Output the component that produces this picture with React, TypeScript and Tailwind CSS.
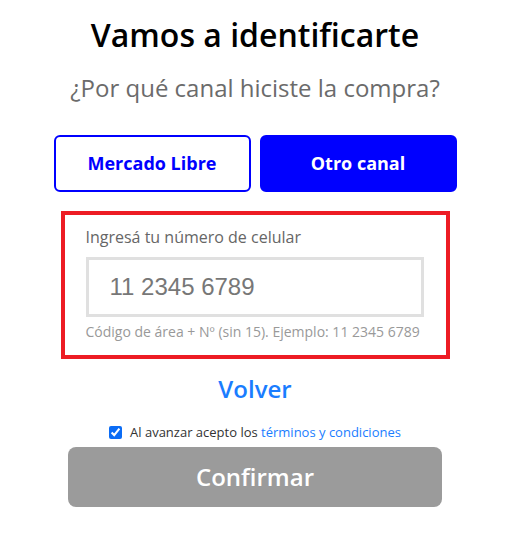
import { useState } from "react";

const FONT = { fontFamily: '"Open Sans", "Noto Sans", sans-serif' };

export default function App() {
  const [channel, setChannel] = useState<"ml" | "otro">("otro");
  const [accepted, setAccepted] = useState(true);

  return (
    <div className="flex min-h-[544px] w-[510px] flex-col items-center bg-white pt-[12px]" style={FONT}>
      <h1 className="text-[32px] leading-[46px] font-semibold text-black">Vamos a identificarte</h1>
      <p className="mt-[14px] text-[24px] leading-[32px] text-[#6b6b6b]">¿Por qué canal hiciste la compra?</p>

      <div className="mt-[31px] flex gap-[9px]">
        <button
          type="button"
          onClick={() => setChannel("ml")}
          className={
            channel === "ml"
              ? "h-[57px] w-[197px] rounded-[6px] border-2 border-[#0000ff] bg-[#0000ff] text-[18px] font-bold text-white"
              : "h-[57px] w-[197px] rounded-[6px] border-2 border-[#0000ff] bg-white text-[18px] font-bold text-[#0000ff]"
          }
        >
          Mercado Libre
        </button>
        <button
          type="button"
          onClick={() => setChannel("otro")}
          className={
            channel === "otro"
              ? "h-[57px] w-[197px] rounded-[6px] border-2 border-[#0000ff] bg-[#0000ff] text-[18px] font-bold text-white"
              : "h-[57px] w-[197px] rounded-[6px] border-2 border-[#0000ff] bg-white text-[18px] font-bold text-[#0000ff]"
          }
        >
          Otro canal
        </button>
      </div>

      <div className="mt-[19px] w-[389px] border-4 border-[#ed1c24] px-[21px] pt-[11px] pb-[13px]">
        <label htmlFor="celular" className="block text-[16px] leading-[22px] text-[#666]">
          Ingresá tu número de celular
        </label>
        <input
          id="celular"
          placeholder="11 2345 6789"
          className="mt-[9px] h-[60px] w-[338px] border-[3px] border-[#e0e0e0] px-[21px] text-[24px] text-[#777] outline-none placeholder:text-[#777]"
          style={{ fontFamily: '"Liberation Sans", Arial, sans-serif' }}
        />
        <p className="mt-[5px] text-[14px] leading-[20px] text-[#999]">
          Código de área + Nº (sin 15). Ejemplo: 11 2345 6789
        </p>
      </div>

      <button type="button" className="mt-[13px] text-[24px] leading-[34px] font-semibold text-[#1a7dff]">
        Volver
      </button>

      <label className="mt-[17px] flex items-center gap-[8px] text-[13px] leading-[18px] text-[#333]">
        <input
          type="checkbox"
          checked={accepted}
          onChange={(e) => setAccepted(e.target.checked)}
          className="h-[13px] w-[13px] accent-[#0b6cf5]"
        />
        <span>
          Al avanzar acepto los <a className="text-[#1a7dff]">términos y condiciones</a>
        </span>
      </label>

      <button
        type="button"
        disabled={!accepted}
        className="mt-[6px] h-[60px] w-[374px] rounded-[8px] bg-[#9b9b9b] text-[24px] font-semibold text-white"
      >
        Confirmar
      </button>
    </div>
  );
}
